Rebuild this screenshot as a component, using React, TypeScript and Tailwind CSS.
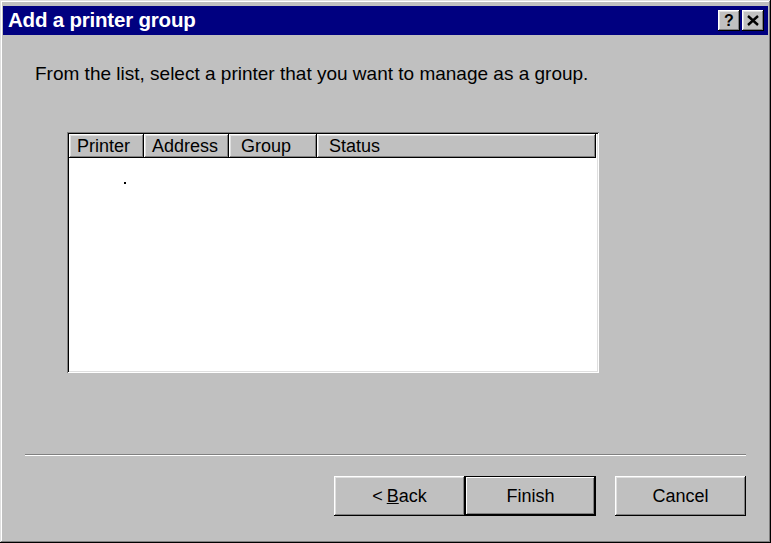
import React from 'react'

const raised =
  'shadow-[inset_-1px_-1px_#000000,inset_1px_1px_#ffffff,inset_-2px_-2px_#808080,inset_2px_2px_#dfdfdf]'

function HeaderCell({ label, className }: { label: string; className: string }) {
  return (
    <div className={`${className} flex h-[24px] items-center bg-[#c0c0c0] px-[8px] ${raised}`}>
      <span className="leading-none">{label}</span>
    </div>
  )
}

function Button({ children, primary }: { children: React.ReactNode; primary?: boolean }) {
  return (
    <button
      className={
        primary
          ? 'flex h-[40px] w-[131px] items-center justify-center border border-black bg-[#c0c0c0] text-[18px] shadow-[inset_-1px_-1px_#000000,inset_1px_1px_#ffffff,inset_-2px_-2px_#808080]'
          : `flex h-[40px] w-[131px] items-center justify-center bg-[#c0c0c0] text-[18px] ${raised}`
      }
    >
      {children}
    </button>
  )
}

export default function App() {
  return (
    <div className="h-[543px] w-[771px] bg-white font-['Liberation_Sans',Arial,sans-serif] text-[16px] text-black">
      <div className="flex h-[543px] w-[771px] flex-col bg-[#c0c0c0] p-[3px] shadow-[inset_-1px_-1px_#000000,inset_1px_1px_#dfdfdf,inset_-2px_-2px_#808080,inset_2px_2px_#ffffff]">
        {/* title bar */}
        <div className="mt-[3px] flex h-[29px] items-center justify-between bg-[#000080] pl-[5px] pr-[4px]">
          <span className="text-[20.5px] font-bold leading-none tracking-[-0.2px] text-white">Add a printer group</span>
          <div className="flex gap-[2px]">
            <div className={`flex h-[21px] w-[22px] items-center justify-center bg-[#c0c0c0] text-[16px] font-bold ${raised}`}>
              ?
            </div>
            <div className={`flex h-[21px] w-[22px] items-center justify-center bg-[#c0c0c0] ${raised}`}>
              <svg width="12" height="11" viewBox="0 0 12 11">
                <path d="M1 1 L11 10 M11 1 L1 10" stroke="#000" strokeWidth="2.4" />
              </svg>
            </div>
          </div>
        </div>

        <div className="flex flex-1 flex-col px-[22px]">
          <p className="mt-[27px] pl-[10px] text-[19px] leading-[24px]">
            From the list, select a printer that you want to manage as a group.
          </p>

          {/* list view */}
          <div className="ml-[42px] mt-[46px] flex h-[241px] w-[532px] flex-col bg-white p-[2px] shadow-[inset_1px_1px_#808080,inset_-1px_-1px_#ffffff,inset_2px_2px_#000000,inset_-2px_-2px_#dfdfdf]">
            <div className="flex text-[18px]">
              <HeaderCell label="Printer" className="w-[75px]" />
              <HeaderCell label="Address" className="w-[85px]" />
              <HeaderCell label="Group" className="w-[88px] !pl-[12px]" />
              <HeaderCell label="Status" className="w-[279px] !pl-[12px]" />
            </div>
            <div className="relative flex-1">
              <div className="absolute left-[55px] top-[24px] h-[2px] w-[2px] bg-black" />
            </div>
          </div>

          <div className="mt-[81px] h-[2px] border-t border-b border-t-[#808080] border-b-white" />

          <div className="mt-[20px] flex justify-end gap-[19px]">
            <div className="flex">
              <Button>
                &lt; <span className="ml-[4px] underline">B</span>ack
              </Button>
              <Button primary>Finish</Button>
            </div>
            <Button>Cancel</Button>
          </div>
        </div>
      </div>
    </div>
  )
}
